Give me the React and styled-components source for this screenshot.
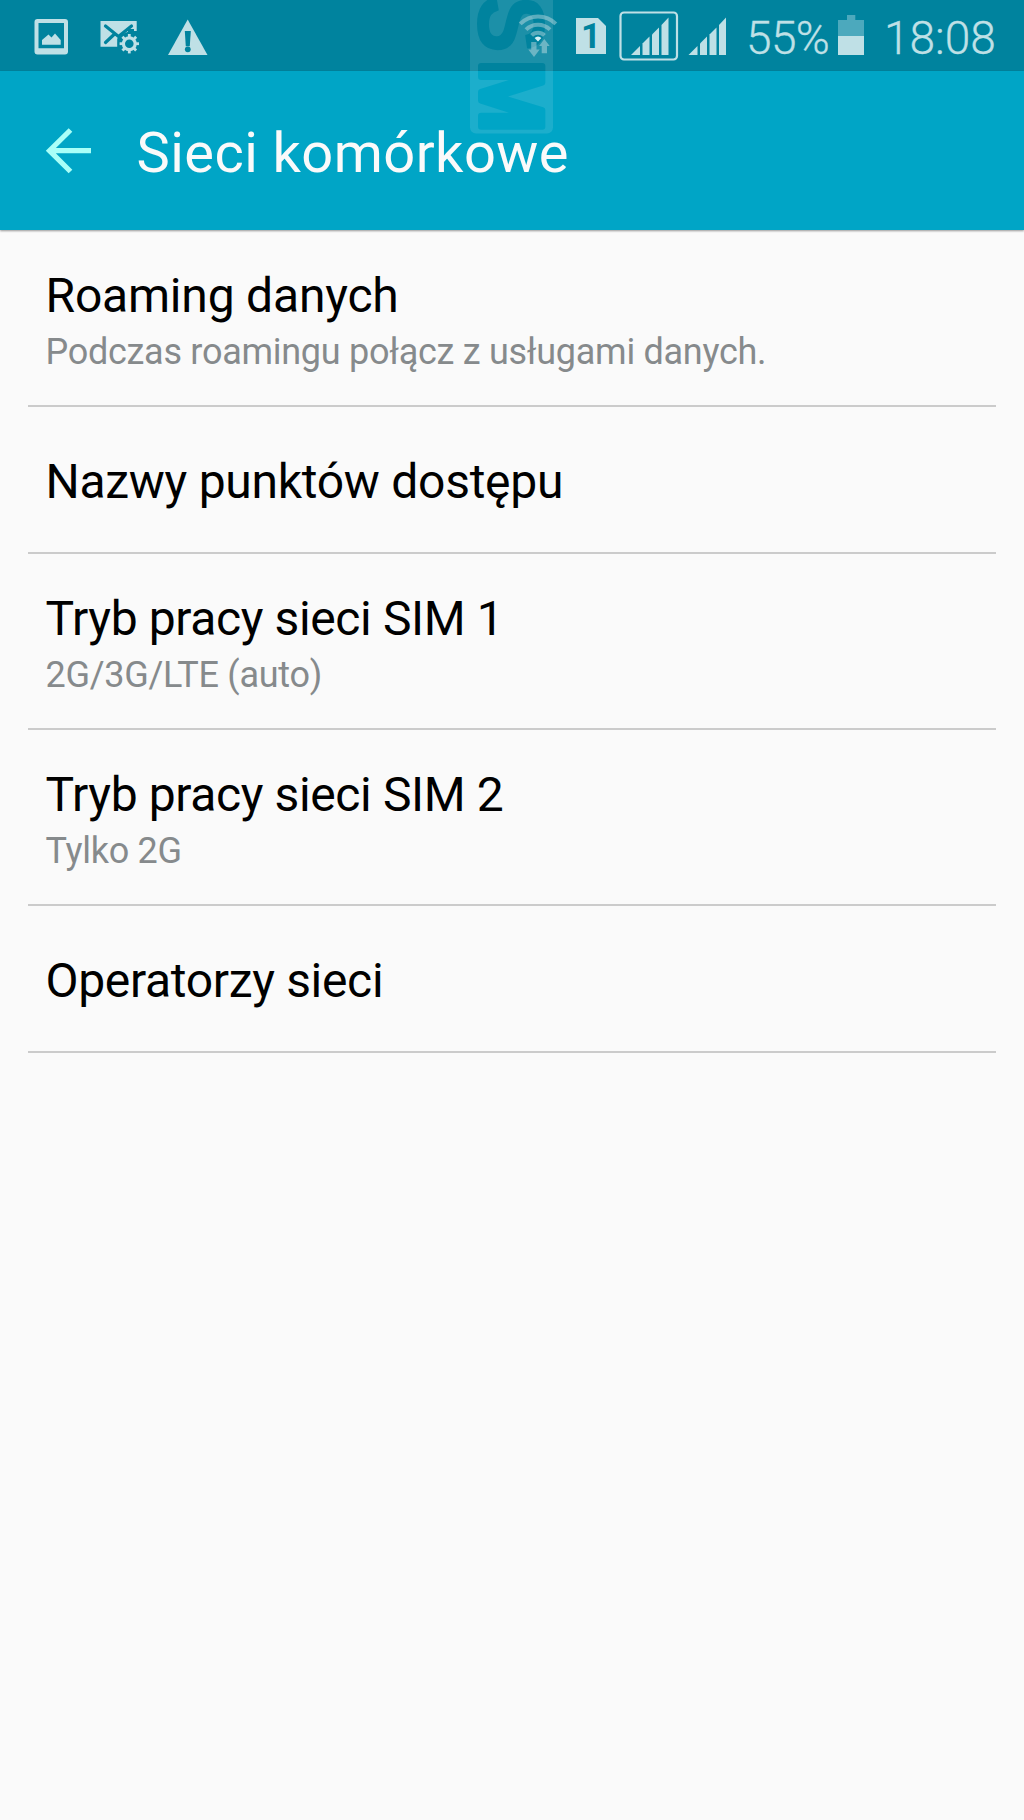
import styled, { createGlobalStyle } from "styled-components";

const GlobalStyle = createGlobalStyle`
  body {
    margin: 0;
    background: #fafafa;
    font-family: Roboto, sans-serif;
  }
`;

const Screen = styled.div`
  position: relative;
  width: 1024px;
  height: 1820px;
  overflow: hidden;
  background: #fafafa;
`;

const StatusBar = styled.div`
  height: 71px;
  display: flex;
  justify-content: space-between;
  background: #00839e;
`;

const StatusGroup = styled.div`
  display: flex;
  height: 71px;
`;

const StatusIcon = styled.svg`
  display: block;
  flex: none;
  width: ${(props) => props.$width}px;
  height: 71px;
  margin-left: ${(props) => props.$gap}px;
  fill: #bfe0e6;
`;

const StatusText = styled.div`
  width: ${(props) => props.$width}px;
  margin-left: ${(props) => props.$gap}px;
  color: #bfe0e6;
  font-size: 46px;
  font-weight: 300;
  line-height: 77px;
  letter-spacing: ${(props) => props.$spacing || 0}px;
  -webkit-text-stroke: 0.3px #bfe0e6;
  white-space: nowrap;
`;

const SimBadge = styled.div`
  width: 30px;
  height: 36px;
  margin: 18px 0 0 16px;
  clip-path: polygon(0 0, 22px 0, 100% 8px, 100% 100%, 0 100%);
  background: #bfe0e6;
  color: #00839e;
  font-size: 35px;
  font-weight: 700;
  line-height: 38px;
  text-align: center;
`;

const Header = styled.div`
  height: 159px;
  display: flex;
  background: #00a5c6;
  box-shadow: 0 1px 2px rgba(0, 0, 0, 0.4);
`;

const BackButton = styled.svg`
  display: block;
  width: 48px;
  height: 48px;
  margin: 56px 0 0 45px;
`;

const Title = styled.h1`
  margin: 0 0 0 43.5px;
  color: #fafafa;
  font-size: 56px;
  font-weight: 400;
  line-height: 164px;
  letter-spacing: 0.44px;
`;

const List = styled.div`
  padding: 1px 28px 0;
`;

const Item = styled.div`
  height: ${(props) => (props.$tall ? 174 : 145)}px;
  padding-left: 17.5px;
  border-bottom: 2px solid #cbcbcb;
`;

const ItemTitle = styled.div`
  padding-top: ${(props) => (props.$tall ? 37 : 47)}px;
  color: #000;
  font-size: 48px;
  line-height: 56px;
  letter-spacing: ${(props) => props.$spacing || -0.28}px;
  white-space: nowrap;
`;

const ItemSummary = styled.div`
  margin-top: 6px;
  color: #868a8c;
  font-size: 36px;
  line-height: 44px;
  letter-spacing: -0.28px;
  white-space: nowrap;
`;

const Watermark = styled.svg`
  position: absolute;
  top: 0;
  left: 470px;
  width: 83px;
  height: 134px;
`;

const items = [
  {
    title: "Roaming danych",
    summary: "Podczas roamingu połącz z usługami danych.",
    spacing: -0.2,
  },
  { title: "Nazwy punktów dostępu" },
  {
    title: "Tryb pracy sieci SIM 1",
    summary: "2G/3G/LTE (auto)",
    spacing: -0.38,
  },
  { title: "Tryb pracy sieci SIM 2", summary: "Tylko 2G", spacing: -0.38 },
  { title: "Operatorzy sieci", spacing: -0.32 },
];

const gearTeeth = [0, 45, 90, 135, 180, 225, 270, 315];

function PictureIcon() {
  return (
    <StatusIcon $width={34} $gap={34} viewBox="34 0 34 71">
      <path
        fillRule="evenodd"
        d="M37.5 19H65a3 3 0 0 1 3 3v29.500a3 3 0 0 1-3 3H37.500a3 3 0 0 1-3-3V22a3 3 0 0 1 3-3zM38.500 23v25.300H64V23z"
      />
      <path d="M42 44.700v-4.700l6.500-5.500 3 3 3.500-4 5.700 6.500v4.700z" />
    </StatusIcon>
  );
}

function MailIcon() {
  return (
    <StatusIcon $width={40} $gap={32} viewBox="100 0 40 71">
      <path d="M100.500 21H136.700V31h-7.500l-12 7.500v8.200h-16.700z" />
      <path
        d="M105.500 26L118.500 36.500L131.500 26M105.500 42.500L114 34.500"
        fill="none"
        stroke="#00839e"
        strokeWidth="3.200"
        strokeLinecap="round"
      />
      <circle cx="129.300" cy="43.700" r="11.500" fill="#00839e" />
      <path d="M128 29h6v3h-6z" fill="#00839e" />
      <circle
        cx="129.300"
        cy="43.700"
        r="5.900"
        fill="none"
        stroke="#bfe0e6"
        strokeWidth="3.200"
      />
      {gearTeeth.map((angle) => (
        <rect
          key={angle}
          x="127.900"
          y="34"
          width="2.800"
          height="4"
          transform={`rotate(${angle} 129.300 43.700)`}
        />
      ))}
    </StatusIcon>
  );
}

function WarningIcon() {
  return (
    <StatusIcon $width={40} $gap={28} viewBox="168 0 40 71">
      <path d="M187.700 19.500L207.500 55H168z" />
      <path d="M184.800 31h6l-1 15.200h-4z" fill="#00839e" />
      <circle cx="187.800" cy="49.300" r="2.900" fill="#00839e" />
    </StatusIcon>
  );
}

function WifiIcon() {
  return (
    <StatusIcon $width={42} $gap={0} viewBox="518 0 42 71">
      <g fill="none" stroke="#5aacbd" strokeWidth="4">
        <path d="M520.200 23.900A25 25 0 0 1 555.800 23.900" />
        <path d="M526 29.700A17 17 0 0 1 550 29.700" />
        <path d="M531.600 35.300A9 9 0 0 1 544.400 35.300" />
      </g>
      <path d="M538 41.500L534.600 38A4.400 4.400 0 0 1 541.400 38z" fill="#d5f0f5" />
      <path
        d="M531.200 42h5.300v7.500h3.200L534 57l-5.700-7.500h2.900z"
        fill="#5aacbd"
      />
      <path
        d="M541.700 53.300h5.300V46h2.700L544.300 39l-5.200 7h2.600z"
        fill="#5aacbd"
      />
    </StatusIcon>
  );
}

function SignalBars() {
  return (
    <>
      <path d="M0 36L9 27V36z" />
      <path d="M11.500 36V24.500L18.500 17.500V36z" />
      <path d="M21 36V15.500L28 8.500V36z" />
      <path d="M30.500 36V6L37.500-1.500V36z" />
    </>
  );
}

function BatteryIcon() {
  return (
    <StatusIcon $width={26} $gap={9} viewBox="838 0 26 71">
      <path d="M838 36V20h9v-5h8.300v5h8.700v16z" fill="#4ca9bd" />
      <path d="M838 36h26v19h-26z" />
    </StatusIcon>
  );
}

function App() {
  return (
    <>
      <GlobalStyle />
      <Screen>
        <StatusBar>
          <StatusGroup>
            <PictureIcon />
            <MailIcon />
            <WarningIcon />
          </StatusGroup>
          <StatusGroup>
            <WifiIcon />
            <SimBadge>1</SimBadge>
            <StatusIcon $width={60} $gap={13} viewBox="0 0 60 71">
              <rect
                x="1.500"
                y="12.500"
                width="56.500"
                height="47"
                rx="3.500"
                fill="none"
                stroke="#bfe0e6"
                strokeWidth="2.200"
              />
              <g transform="translate(12 19)">
                <SignalBars />
              </g>
            </StatusIcon>
            <StatusIcon $width={39} $gap={9} viewBox="0 0 39 71">
              <g transform="translate(0.500 19)">
                <SignalBars />
              </g>
            </StatusIcon>
            <StatusText $width={83} $gap={19} $spacing={-0.6}>
              55%
            </StatusText>
            <BatteryIcon />
            <StatusText $width={140} $gap={20}>
              18:08
            </StatusText>
          </StatusGroup>
        </StatusBar>
        <Header>
          <BackButton viewBox="0 0 48 48">
            <path
              d="M46 23.700H4M25.500 3L4.500 23.700L25.500 44.500"
              fill="none"
              stroke="#a9fff8"
              strokeWidth="5.200"
            />
          </BackButton>
          <Title>Sieci komórkowe</Title>
        </Header>
        <List>
          {items.map((item) => (
            <Item key={item.title} $tall={!!item.summary}>
              <ItemTitle $tall={!!item.summary} $spacing={item.spacing}>
                {item.title}
              </ItemTitle>
              {item.summary && <ItemSummary>{item.summary}</ItemSummary>}
            </Item>
          ))}
        </List>
        <Watermark viewBox="0 0 83 134">
          <mask id="letters">
            <rect width="83" height="134" fill="#fff" />
            <g
              fontFamily="Liberation Sans, sans-serif"
              fontWeight="700"
              stroke="#000"
              strokeLinejoin="round"
            >
              <text
                transform="translate(9 -4.500) rotate(90) scale(0.93 1)"
                fontSize="92"
                strokeWidth="2"
              >
                S
              </text>
              <text
                transform="translate(10.500 60) rotate(90) scale(0.98 1)"
                fontSize="89"
                strokeWidth="6"
              >
                M
              </text>
            </g>
          </mask>
          <rect
            y="-10"
            width="83"
            height="143.500"
            rx="6"
            fill="#fff"
            fillOpacity="0.11"
            mask="url(#letters)"
          />
        </Watermark>
      </Screen>
    </>
  );
}

export default App;
